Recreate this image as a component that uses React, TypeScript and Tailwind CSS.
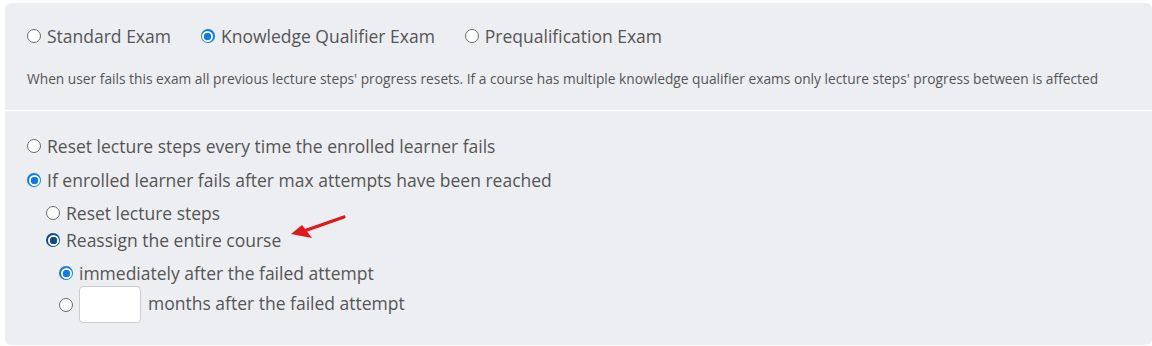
import React from "react";

function Radio({ checked = false, dark = false }: { checked?: boolean; dark?: boolean }) {
  if (!checked) {
    return <span className="inline-block h-[14px] w-[14px] shrink-0 rounded-full border-[1.5px] border-[#6b6b6b] bg-white" />;
  }
  return (
    <span
      className={`flex h-[14px] w-[14px] shrink-0 items-center justify-center rounded-full ${
        dark ? "bg-[#0f4d8a]" : "bg-[#0a7cf0]"
      }`}
    >
      <span className="block h-[11px] w-[11px] rounded-full border-[2px] border-white">
        <span className={`block h-full w-full rounded-full ${dark ? "bg-[#0f4d8a]" : "bg-[#0a7cf0]"}`} />
      </span>
    </span>
  );
}

export default function App() {
  return (
    <div className="h-[346px] w-[1152px] bg-white pl-[5px] pt-[3px] font-['Open_Sans',sans-serif] text-[#555]">
      <div className="h-[342px] w-[1147px] rounded-md bg-[#edeef2]">
        {/* exam type */}
        <div className="border-b border-white px-[22px] pb-[22px] pt-[20px]">
          <div className="flex items-center gap-[30px] text-[17.5px] leading-[26px]">
            <label className="flex items-center gap-[6px]">
              <Radio />
              Standard Exam
            </label>
            <label className="flex items-center gap-[6px]">
              <Radio checked />
              Knowledge Qualifier Exam
            </label>
            <label className="flex items-center gap-[6px]">
              <Radio />
              Prequalification Exam
            </label>
          </div>
          <p className="mt-[21px] text-[13.75px] leading-[18px] text-[#555]">
            When user fails this exam all previous lecture steps' progress resets. If a course has multiple knowledge
            qualifier exams only lecture steps' progress between is affected
          </p>
        </div>

        {/* reset rules */}
        <div className="px-[22px] pt-[22px] text-[17.5px] leading-[26px]">
          <label className="flex items-center gap-[6px]">
            <Radio />
            Reset lecture steps every time the enrolled learner fails
          </label>
          <label className="mt-[8px] flex items-center gap-[6px]">
            <Radio checked />
            If enrolled learner fails after max attempts have been reached
          </label>
          <div className="pl-[19px]">
            <label className="mt-[7px] flex items-center gap-[6px]">
              <Radio />
              Reset lecture steps
            </label>
            <div className="relative mt-[1px] flex items-center gap-[6px]">
              <Radio checked dark />
              Reassign the entire course
              <svg
                className="absolute left-[242px] top-[-14px]"
                width="60"
                height="28"
                viewBox="0 0 60 28"
              >
                <line x1="56" y1="4" x2="16" y2="18" stroke="#e3161b" strokeWidth="3.2" strokeLinecap="round" />
                <polygon points="3,21 14,12 24,25" fill="#e3161b" />
              </svg>
            </div>
            <div className="pl-[13px]">
              <label className="mt-[7px] flex items-center gap-[6px]">
                <Radio checked />
                immediately after the failed attempt
              </label>
              <label className="flex items-center gap-[6px]">
                <Radio />
                <input
                  type="text"
                  className="h-[37px] w-[62px] rounded-[4px] border border-[#ccc] bg-white outline-none"
                />
                <span className="ml-[1px] -mt-[3px]">months after the failed attempt</span>
              </label>
            </div>
          </div>
        </div>
      </div>
    </div>
  );
}
